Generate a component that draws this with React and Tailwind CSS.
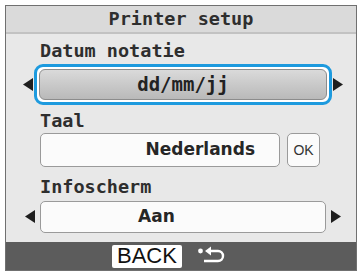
import React from "react";

const mono = { fontFamily: '"DejaVu Sans Mono", "Liberation Mono", monospace' };
const sans = { fontFamily: '"DejaVu Sans", "Liberation Sans", Arial, sans-serif' };
const arial = { fontFamily: '"Liberation Sans", Arial, sans-serif' };

function LeftArrow() {
  return (
    <svg width="10" height="13" viewBox="0 0 10 13"><polygon points="10,0 10,13 0,6.5" fill="#1e1e1e" /></svg>
  );
}
function RightArrow() {
  return (
    <svg width="10" height="13" viewBox="0 0 10 13"><polygon points="0,0 0,13 10,6.5" fill="#1e1e1e" /></svg>
  );
}

export default function App() {
  return (
    <div className="w-[362px] h-[273px] bg-white p-[5px]" style={mono}>
      <div className="w-[352px] h-[266px] border border-[#707070] bg-[#e8e8e8] flex flex-col">
        <div className="h-[28px] bg-[#dadada] border-b-2 border-[#c2c2c2] flex items-center justify-center text-[18.5px] font-bold text-[#2e2e2e] leading-none">
          Printer setup
        </div>
        <div className="flex-1 flex flex-col pl-[34px] pr-[24px]">
          <div className="h-[30px] flex items-end pb-[4px] text-[18.5px] font-bold leading-none text-[#2e2e2e]">Datum notatie</div>
          <div className="relative h-[41px] -ml-[6px]">
            <div className="absolute left-[-11px] top-[14px]"><LeftArrow /></div>
            <div className="absolute right-[-11px] top-[14px]"><RightArrow /></div>
            <div className="h-full rounded-[9px] border-[3px] border-[#1d9ade] bg-white p-[2px]">
              <div className="h-full rounded-[6px] border border-[#8c8c8c] bg-gradient-to-b from-[#dadada] to-[#b9b9b9] flex items-center justify-center text-[19px] font-bold text-[#222]">
                dd/mm/jj
              </div>
            </div>
          </div>
          <div className="h-[28px] flex items-end pb-[3px] text-[18.5px] font-bold leading-none text-[#2e2e2e]">Taal</div>
          <div className="flex h-[34px] gap-[7px]">
            <div className="flex-1 rounded-[5px] border border-[#9a9a9a] bg-[#fbfbfb] flex items-center justify-end pr-[24px] text-[17px] font-bold text-[#262626]" style={sans}>
              Nederlands
            </div>
            <div className="w-[33px] mr-[12px] rounded-[5px] border border-[#9a9a9a] bg-[#fbfbfb] flex items-center justify-center text-[14px] text-[#333]" style={arial}>
              OK
            </div>
          </div>
          <div className="h-[34px] flex items-end pb-[5px] text-[18.5px] font-bold leading-none text-[#2e2e2e]">Infoscherm</div>
          <div className="relative h-[32px] mr-[6px]">
            <div className="absolute left-[-15px] top-[9px]"><LeftArrow /></div>
            <div className="absolute right-[-15px] top-[9px]"><RightArrow /></div>
            <div className="h-full rounded-[5px] border border-[#9a9a9a] bg-[#fbfbfb] flex items-center pl-[97px] text-[17px] font-bold text-[#262626]" style={sans}>
              Aan
            </div>
          </div>
        </div>
        <div className="h-[28px] bg-[#5c5c5c] flex items-center pl-[106px] gap-[15px]">
          <div className="bg-white rounded-[2px] px-[5px] h-[23px] flex items-center text-[22px] text-[#111] leading-none" style={arial}>
            BACK
          </div>
          <svg width="30" height="20" viewBox="0 0 30 20">
            <circle cx="3.5" cy="5" r="2.4" fill="#fff" />
            <path d="M11 5 H21 a5 5 0 0 1 0 10 H7" fill="none" stroke="#fff" strokeWidth="2.4" />
            <polygon points="8,5 14,0.5 14,9.5" fill="#fff" />
          </svg>
        </div>
      </div>
    </div>
  );
}
